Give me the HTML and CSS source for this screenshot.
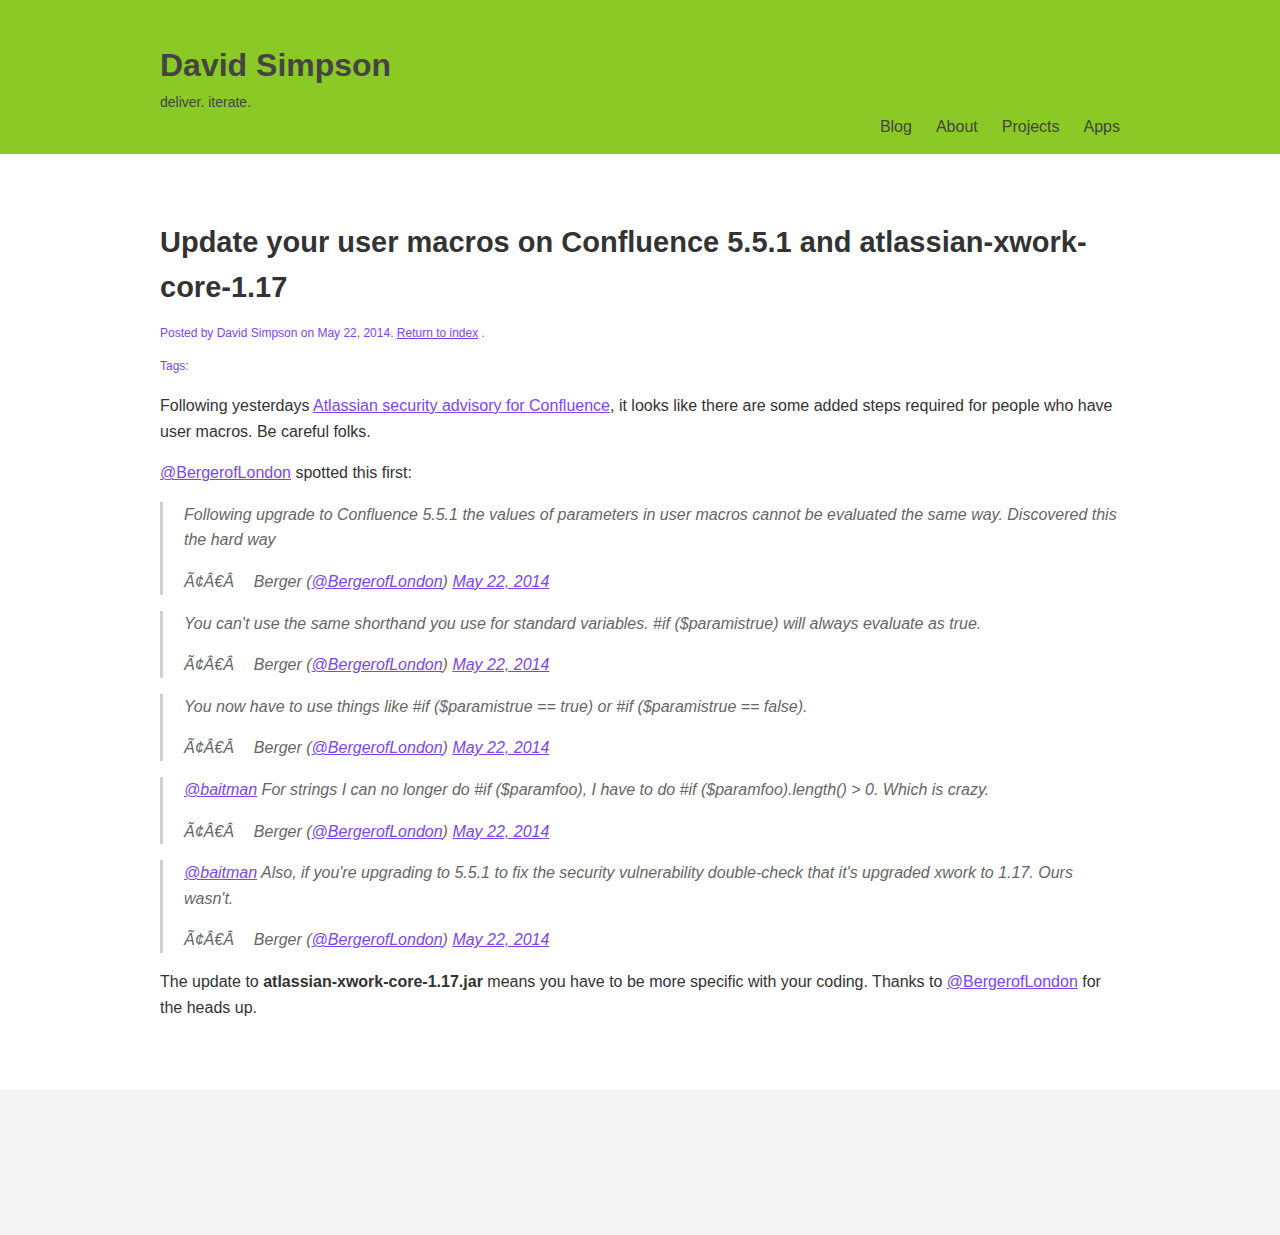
FILE: index.html
```html
<!DOCTYPE html>
<html lang="en">
<head>
<meta charset="utf-8">
<title>Update your user macros on Confluence 5.5.1 and atlassian-xwork-core-1.17</title>
<link rel="stylesheet" href="styles.css">
</head>
<body>
<header class="site-header">
  <div class="wrap header-inner">
    <div class="brand">
      <h1 class="site-title">David Simpson</h1>
      <p class="tagline">deliver. iterate.</p>
    </div>
    <nav class="nav">
      <a href="#">Blog</a>
      <a href="#">About</a>
      <a href="#">Projects</a>
      <a href="#">Apps</a>
    </nav>
  </div>
</header>
<main class="wrap content">
  <h2 class="post-title">Update your user macros on Confluence 5.5.1 and atlassian-xwork-core-1.17</h2>
  <p class="meta">Posted by David Simpson on May 22, 2014. <a href="#">Return to index</a> .</p>
  <p class="meta tags">Tags:</p>
  <p>Following yesterdays <a href="#">Atlassian security advisory for Confluence</a>, it looks like there are some added steps required for people who have user macros. Be careful folks.</p>
  <p><a href="#">@BergerofLondon</a> spotted this first:</p>
  <blockquote>
    <p>Following upgrade to Confluence 5.5.1 the values of parameters in user macros cannot be evaluated the same way. Discovered this the hard way</p>
    <p>Ã¢Â€Â<span class="gap"></span>Berger (<a href="#">@BergerofLondon</a>) <a href="#">May 22, 2014</a></p>
  </blockquote>
  <blockquote>
    <p>You can't use the same shorthand you use for standard variables. #if ($paramistrue) will always evaluate as true.</p>
    <p>Ã¢Â€Â<span class="gap"></span>Berger (<a href="#">@BergerofLondon</a>) <a href="#">May 22, 2014</a></p>
  </blockquote>
  <blockquote>
    <p>You now have to use things like #if ($paramistrue == true) or #if ($paramistrue == false).</p>
    <p>Ã¢Â€Â<span class="gap"></span>Berger (<a href="#">@BergerofLondon</a>) <a href="#">May 22, 2014</a></p>
  </blockquote>
  <blockquote>
    <p><a href="#">@baitman</a> For strings I can no longer do #if ($paramfoo), I have to do #if ($paramfoo).length() &gt; 0. Which is crazy.</p>
    <p>Ã¢Â€Â<span class="gap"></span>Berger (<a href="#">@BergerofLondon</a>) <a href="#">May 22, 2014</a></p>
  </blockquote>
  <blockquote>
    <p><a href="#">@baitman</a> Also, if you're upgrading to 5.5.1 to fix the security vulnerability double-check that it's upgraded xwork to 1.17. Ours wasn't.</p>
    <p>Ã¢Â€Â<span class="gap"></span>Berger (<a href="#">@BergerofLondon</a>) <a href="#">May 22, 2014</a></p>
  </blockquote>
  <p>The update to <strong>atlassian-xwork-core-1.17.jar</strong> means you have to be more specific with your coding. Thanks to <a href="#">@BergerofLondon</a> for the heads up.</p>
</main>
<footer class="site-footer"></footer>
</body>
</html>
```
FILE: styles.css
```css
html, body {
  margin: 0;
  padding: 0;
}
body {
  font-family: "Liberation Sans", Arial, Helvetica, sans-serif;
  color: #333;
  background: #fff;
  min-height: 1235px;
  display: flex;
  flex-direction: column;
}
a {
  color: #7b45f5;
}
.wrap {
  width: 960px;
  margin: 0 auto;
}
.site-header {
  background: #8ac926;
  height: 154px;
}
.header-inner {
  display: flex;
  justify-content: space-between;
  align-items: flex-end;
  height: 154px;
  box-sizing: border-box;
  padding-bottom: 18px;
}
.brand {
  align-self: flex-start;
  padding-top: 45px;
}
.site-title {
  margin: 0;
  font-size: 32px;
  line-height: 40px;
  font-weight: bold;
  color: #444;
}
.tagline {
  margin: 9px 0 0;
  font-size: 14px;
  line-height: 16px;
  color: #444;
}
.nav {
  display: flex;
  gap: 24px;
}
.nav a {
  color: #444;
  text-decoration: none;
  font-size: 16px;
  line-height: 18px;
}
.content {
  padding-top: 66px;
  padding-bottom: 54px;
  font-size: 16px;
  line-height: 1.6;
}
.post-title {
  margin: 0;
  font-size: 29px;
  line-height: 45px;
  font-weight: bold;
  color: #333;
}
.content p {
  margin: 0 0 16px;
}
.content p.meta {
  font-size: 12px;
  line-height: 18px;
  color: #7b45f5;
  margin: 14px 0 0;
}
.content p.tags {
  margin: 15px 0 18px;
}
blockquote {
  margin: 16px 0;
  padding: 0 0 0 21px;
  border-left: 3px solid #d0d0d0;
  font-style: italic;
  color: #666;
}
.content blockquote p:last-child {
  margin-bottom: 0;
}
.gap {
  display: inline-block;
  width: 20px;
}
.site-footer {
  background: #f4f4f4;
  flex: 1;
}
```
